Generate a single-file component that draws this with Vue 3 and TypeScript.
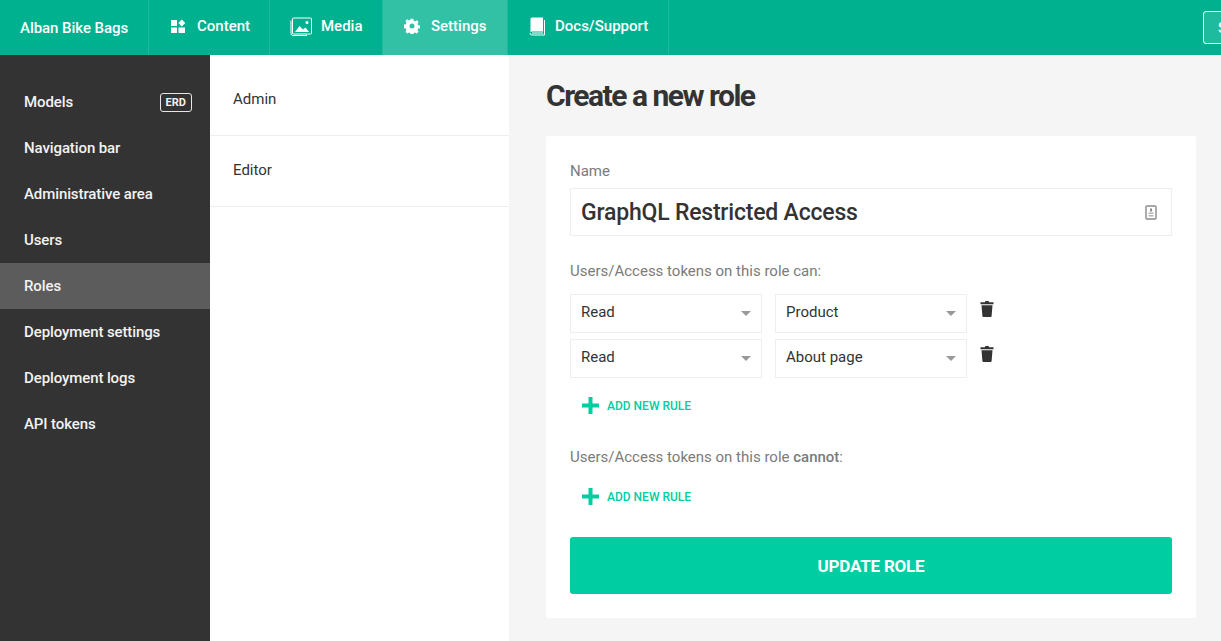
<template>
  <div class="page">
    <header class="topbar">
      <div class="brand">Alban Bike Bags</div>
      <a class="tab tab-content">
        <svg class="tab-icon" width="16" height="16" viewBox="0 0 16 16"><path fill="#fff" d="M1 2h6v6H1zM1 9.500h6V15H1zM8.500 9.500H15V15H8.500zM11.800 1.500l3.500 3.500-3.500 3.500-3.500-3.500z"/></svg>
        <span>Content</span>
      </a>
      <a class="tab tab-media">
        <svg class="tab-icon" width="22" height="19" viewBox="0 0 22 19" fill="none"><path stroke="#fff" d="M1 3.500v13a2 2 0 0 0 2 2h14"/><rect x="2.500" y="1" width="19" height="16" rx="1" stroke="#fff"/><path fill="#fff" d="M5 15l4.500-6 3.500 3.500 2.500-2L19 15z"/><circle cx="17" cy="5.500" r="1.500" fill="#fff"/></svg>
        <span>Media</span>
      </a>
      <a class="tab tab-settings active">
        <svg class="tab-icon" width="16" height="16" viewBox="0 0 16 16"><path fill="#fff" fill-rule="evenodd" d="M6.700.8h2.600l.4 2 1.300.6 1.800-1.100 1.800 1.800-1.100 1.800.6 1.300 2 .4v2.600l-2 .4-.6 1.300 1.100 1.800-1.800 1.800-1.800-1.100-1.300.6-.4 2H6.700l-.4-2-1.300-.6-1.800 1.100-1.800-1.800 1.100-1.800-.6-1.300-2-.4V6.600l2-.4.6-1.300-1.100-1.800 1.800-1.800 1.800 1.100 1.300-.6zM8 5.500a2.500 2.500 0 1 0 0 5 2.500 2.500 0 0 0 0-5z"/></svg>
        <span>Settings</span>
      </a>
      <a class="tab tab-docs">
        <svg class="tab-icon" width="17" height="19" viewBox="0 0 17 19" fill="none"><path fill="#fff" d="M3 .500h11v14H3a2 2 0 0 0-1.500.7V2A1.500 1.500 0 0 1 3 .500z"/><path stroke="#fff" d="M15.500 3v15H3a2 2 0 0 1-2-2"/><path stroke="#fff" d="M3 16h11"/></svg>
        <span>Docs/Support</span>
      </a>
      <button class="save-btn">Save</button>
    </header>

    <div class="body">
      <nav class="sidebar">
        <a v-for="item in sideItems" :key="item" class="side-item" :class="{ selected: item === 'Roles' }">
          <span>{{ item }}</span>
          <span v-if="item === 'Models'" class="erd">ERD</span>
        </a>
      </nav>

      <div class="role-list">
        <a v-for="role in roles" :key="role" class="role-item">{{ role }}</a>
      </div>

      <main class="main">
        <h1>Create a new role</h1>
        <section class="card">
          <label class="field-label">Name</label>
          <div class="name-input">
            <span>GraphQL Restricted Access</span>
            <svg width="12" height="15" viewBox="0 0 12 15" fill="none"><rect x="1" y="1" width="10" height="13" rx="1" stroke="#8a8a8a" stroke-width="1.400"/><path fill="#8a8a8a" d="M5 3.500h2v3H5z"/><path fill="#b5b5b5" d="M3.500 7.500h5v1.500h-5zM3.500 10h5v1.500h-5z"/></svg>
          </div>

          <p class="rule-label can-label">Users/Access tokens on this role can:</p>
          <div v-for="rule in rules" :key="rule.target" class="rule-row">
            <div class="select select-left">
              <span>Read</span><i class="caret"></i>
            </div>
            <div class="select">
              <span>{{ rule.target }}</span><i class="caret"></i>
            </div>
            <svg class="trash" width="14" height="16" viewBox="0 0 14 16"><path fill="#333" d="M4.800 1.300 5.500 0h3l.7 1.300H13.500v2H.500v-2zM1.500 4.300h11L11.600 15a1 1 0 0 1-1 1H3.400a1 1 0 0 1-1-1z"/></svg>
          </div>
          <a class="add-rule add-first">
            <svg width="17" height="17" viewBox="0 0 17 17"><path fill="#00cda1" d="M6.500 0h4v6.500H17v4h-6.500V17h-4v-6.500H0v-4h6.500z"/></svg>
            <span>ADD NEW RULE</span>
          </a>

          <p class="rule-label cannot-label">Users/Access tokens on this role <b>cannot</b>:</p>
          <a class="add-rule add-second">
            <svg width="17" height="17" viewBox="0 0 17 17"><path fill="#00cda1" d="M6.500 0h4v6.500H17v4h-6.500V17h-4v-6.500H0v-4h6.500z"/></svg>
            <span>ADD NEW RULE</span>
          </a>

          <button class="update-btn">UPDATE ROLE</button>
        </section>
      </main>
    </div>
  </div>
</template>

<script setup lang="ts">
const sideItems: string[] = [
  'Models',
  'Navigation bar',
  'Administrative area',
  'Users',
  'Roles',
  'Deployment settings',
  'Deployment logs',
  'API tokens',
];
const roles: string[] = ['Admin', 'Editor'];
const rules: { target: string }[] = [{ target: 'Product' }, { target: 'About page' }];
</script>

<style>
html,
body {
  margin: 0;
  height: 100%;
  overflow: hidden;
}
</style>

<style scoped>
.page {
  width: 1221px;
  height: 641px;
  overflow: hidden;
  font-family: Roboto, "Liberation Sans", sans-serif;
  font-size: 15px;
  color: #333;
  background: #f5f5f5;
}

.topbar {
  height: 55px;
  background: #00b190;
  display: flex;
  align-items: stretch;
  color: #fff;
  font-weight: 500;
  font-size: 15px;
  position: relative;
}

.brand {
  width: 149px;
  padding-left: 20px;
  padding-top: 1px;
  box-sizing: border-box;
  display: flex;
  align-items: center;
  letter-spacing: -0.05px;
  border-right: 1px solid #1fbb9e;
}

.tab {
  display: flex;
  align-items: center;
  box-sizing: border-box;
  border-right: 1px solid #1fbb9e;
  padding-bottom: 3px;
}

.tab-content {
  width: 121px;
  padding-left: 21px;
}
.tab-content .tab-icon {
  margin-right: 11px;
}

.tab-media {
  width: 113px;
  padding-left: 20px;
}
.tab-media .tab-icon {
  margin-right: 9px;
}

.tab-settings {
  width: 125px;
  padding-left: 21px;
  background: #33c1a6;
  border-left: 0;
}
.tab-settings .tab-icon {
  margin-right: 11px;
}

.tab-docs {
  width: 161px;
  padding-left: 21px;
}
.tab-docs .tab-icon {
  margin-right: 9px;
}

.save-btn {
  position: absolute;
  left: 1203px;
  top: 11px;
  width: 60px;
  height: 33px;
  border: 1px solid #fff;
  border-radius: 3px;
  background: #1fbb9e;
  color: #fff;
  font: 500 14px Roboto, sans-serif;
  text-align: left;
  padding-left: 14px;
}

.body {
  display: flex;
  height: 586px;
}

.sidebar {
  width: 210px;
  flex: none;
  background: #333;
  padding-top: 24px;
  box-sizing: border-box;
  font-weight: 500;
  color: #f2f2f2;
  letter-spacing: -0.1px;
}

.side-item {
  height: 46px;
  padding: 0 18px 0 24px;
  display: flex;
  align-items: center;
  justify-content: space-between;
}
.side-item.selected {
  background: #5c5c5c;
}

.erd {
  border: 1px solid #e6e6e6;
  border-radius: 3px;
  font-size: 11px;
  font-weight: 700;
  line-height: 17px;
  padding: 0 5px;
  letter-spacing: 0;
  color: #f2f2f2;
}

.role-list {
  width: 299px;
  flex: none;
  background: #fff;
}

.role-item {
  display: flex;
  align-items: center;
  height: 81px;
  padding-left: 23px;
  padding-top: 8px;
  box-sizing: border-box;
  border-bottom: 1px solid #eee;
  color: #333;
}
.role-item + .role-item {
  height: 71px;
  padding-top: 0;
  padding-bottom: 2px;
}

.main {
  padding-left: 37px;
  flex: 1;
}

h1 {
  margin: 0;
  padding-top: 23px;
  font-size: 30px;
  line-height: 35px;
  font-weight: 700;
  letter-spacing: -1.5px;
  color: #333;
}

.card {
  margin-top: 23px;
  width: 650px;
  height: 482px;
  box-sizing: border-box;
  background: #fff;
  border-radius: 3px;
  padding: 26px 24px 0;
}

.field-label,
.rule-label {
  display: block;
  color: #7b7b7b;
  font-size: 15px;
  line-height: 18px;
  margin: 0;
}
.rule-label b {
  font-weight: 500;
}

.name-input {
  margin-top: 8px;
  height: 48px;
  box-sizing: border-box;
  border: 1px solid #eee;
  display: flex;
  align-items: center;
  justify-content: space-between;
  padding: 0 14px 0 10px;
  font-size: 23px;
  font-weight: 500;
  letter-spacing: -0.2px;
  color: #333;
}

.can-label {
  margin-top: 26px;
  margin-bottom: 14px;
}

.rule-row {
  display: flex;
  align-items: flex-start;
  margin-bottom: 6px;
}

.select {
  width: 192px;
  height: 39px;
  box-sizing: border-box;
  border: 1px solid #eee;
  display: flex;
  align-items: center;
  justify-content: space-between;
  padding: 0 10px 3px;
  color: #333;
}
.select-left {
  margin-right: 13px;
}

.caret {
  width: 0;
  height: 0;
  margin-top: 3px;
  border-left: 5px solid transparent;
  border-right: 5px solid transparent;
  border-top: 5px solid #999;
}

.trash {
  margin: 7px 0 0 13px;
}

.add-rule {
  display: flex;
  align-items: center;
  padding-left: 12px;
  color: #00cda1;
  font-size: 12px;
  font-weight: 500;
}
.add-rule svg {
  margin-right: 8px;
}
.add-first {
  margin-top: 19px;
}
.add-second {
  margin-top: 22px;
}

.cannot-label {
  margin-top: 34px;
}

.update-btn {
  display: block;
  margin-top: 32px;
  width: 100%;
  height: 57px;
  border: 0;
  border-radius: 3px;
  background: #00cda1;
  color: #fff;
  font: 700 17px Roboto, sans-serif;
  letter-spacing: -0.2px;
}
</style>
